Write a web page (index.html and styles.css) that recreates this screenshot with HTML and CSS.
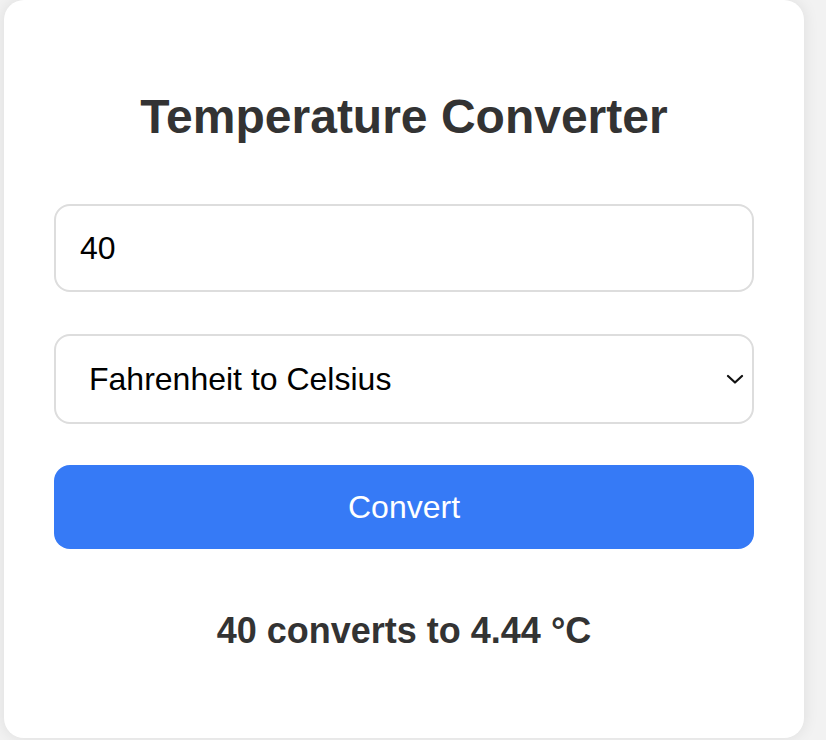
FILE: index.html
```html
<!DOCTYPE html>
<html lang="en">
<head>
<meta charset="utf-8">
<title>Temperature Converter</title>
<link rel="stylesheet" href="styles.css">
</head>
<body>
  <main class="card">
    <h1 class="title">Temperature Converter</h1>
    <div class="form">
      <input class="field" type="text" value="40">
      <div class="select-wrap">
        <select class="field select">
          <option>Fahrenheit to Celsius</option>
          <option>Celsius to Fahrenheit</option>
        </select>
        <svg class="chevron" width="18" height="10" viewBox="0 0 18 10" aria-hidden="true">
          <path d="M2 2 L9 8.5 L16 2" fill="none" stroke="#111" stroke-width="2.2" stroke-linecap="round" stroke-linejoin="round"/>
        </svg>
      </div>
      <button class="button" type="button">Convert</button>
    </div>
    <p class="result">40 converts to 4.44 °C</p>
  </main>
</body>
</html>
```
FILE: styles.css
```css
html, body {
  margin: 0;
  padding: 0;
}
body {
  background: #f2f2f2;
  font-family: "Liberation Sans", Arial, sans-serif;
  height: 740px;
  overflow: hidden;
}
.card {
  box-sizing: border-box;
  width: 800px;
  margin-left: 4px;
  padding: 50px;
  background: #fff;
  border-radius: 20px;
  box-shadow: 0 0 16px rgba(0, 0, 0, 0.09);
}
.title {
  margin: 39px 0 60px;
  font-size: 48px;
  line-height: 55px;
  font-weight: bold;
  color: #333;
  text-align: center;
}
.form {
  display: flex;
  flex-direction: column;
}
.field {
  box-sizing: border-box;
  width: 100%;
  height: 88px;
  padding: 0 24px;
  border: 2px solid #ddd;
  border-radius: 16px;
  font-family: "Liberation Sans", Arial, sans-serif;
  font-size: 32px;
  color: #000;
  background: #fff;
  outline: none;
}
.select-wrap {
  position: relative;
  margin-top: 42px;
}
.select {
  height: 90px;
  padding-left: 33px;
  -webkit-appearance: none;
  appearance: none;
}
.chevron {
  position: absolute;
  right: 10px;
  top: 40px;
}
.button {
  margin-top: 41px;
  height: 84px;
  border: none;
  border-radius: 16px;
  background: #367af6;
  color: #fff;
  font-family: "Liberation Sans", Arial, sans-serif;
  font-size: 32px;
}
.result {
  margin: 61px 0 37px;
  font-size: 36px;
  line-height: 41px;
  font-weight: bold;
  color: #333;
  text-align: center;
}
```
